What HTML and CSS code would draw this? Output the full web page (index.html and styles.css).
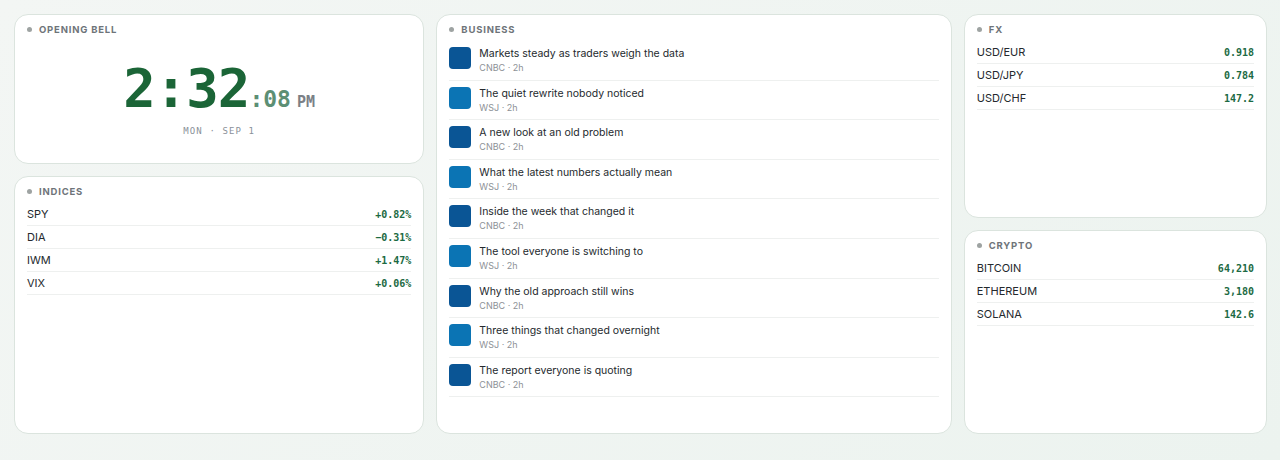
FILE: index.html
```html
<!DOCTYPE html>
<html lang="en">

<head>
    <meta charset="UTF-8">
    <title>Market Board</title>
    <link rel="stylesheet" href="styles.css">
</head>

<body>
    <div class="board">
        <div class="col">
            <div class="panel clock-panel">
                <div class="panel-title"><span class="dot"></span>OPENING BELL</div>
                <div class="clock">
                    <span class="hm">2:32</span><span class="sec">:08</span><span class="ampm">PM</span>
                </div>
                <div class="date">MON · SEP 1</div>
            </div>
            <div class="panel grow">
                <div class="panel-title"><span class="dot"></span>INDICES</div>
                <div class="row"><span>SPY</span><span class="val">+0.82%</span></div>
                <div class="row"><span>DIA</span><span class="val">−0.31%</span></div>
                <div class="row"><span>IWM</span><span class="val">+1.47%</span></div>
                <div class="row"><span>VIX</span><span class="val">+0.06%</span></div>
            </div>
        </div>

        <div class="panel">
            <div class="panel-title"><span class="dot"></span>BUSINESS</div>
            <div class="news">
                <div class="thumb dark"></div>
                <div><div class="headline">Markets steady as traders weigh the data</div><div class="meta">CNBC · 2h</div></div>
            </div>
            <div class="news">
                <div class="thumb light"></div>
                <div><div class="headline">The quiet rewrite nobody noticed</div><div class="meta">WSJ · 2h</div></div>
            </div>
            <div class="news">
                <div class="thumb dark"></div>
                <div><div class="headline">A new look at an old problem</div><div class="meta">CNBC · 2h</div></div>
            </div>
            <div class="news">
                <div class="thumb light"></div>
                <div><div class="headline">What the latest numbers actually mean</div><div class="meta">WSJ · 2h</div></div>
            </div>
            <div class="news">
                <div class="thumb dark"></div>
                <div><div class="headline">Inside the week that changed it</div><div class="meta">CNBC · 2h</div></div>
            </div>
            <div class="news">
                <div class="thumb light"></div>
                <div><div class="headline">The tool everyone is switching to</div><div class="meta">WSJ · 2h</div></div>
            </div>
            <div class="news">
                <div class="thumb dark"></div>
                <div><div class="headline">Why the old approach still wins</div><div class="meta">CNBC · 2h</div></div>
            </div>
            <div class="news">
                <div class="thumb light"></div>
                <div><div class="headline">Three things that changed overnight</div><div class="meta">WSJ · 2h</div></div>
            </div>
            <div class="news">
                <div class="thumb dark"></div>
                <div><div class="headline">The report everyone is quoting</div><div class="meta">CNBC · 2h</div></div>
            </div>
        </div>

        <div class="col">
            <div class="panel half">
                <div class="panel-title"><span class="dot"></span>FX</div>
                <div class="row"><span>USD/EUR</span><span class="val">0.918</span></div>
                <div class="row"><span>USD/JPY</span><span class="val">0.784</span></div>
                <div class="row"><span>USD/CHF</span><span class="val">147.2</span></div>
            </div>
            <div class="panel half">
                <div class="panel-title"><span class="dot"></span>CRYPTO</div>
                <div class="row"><span>BITCOIN</span><span class="val">64,210</span></div>
                <div class="row"><span>ETHEREUM</span><span class="val">3,180</span></div>
                <div class="row"><span>SOLANA</span><span class="val">142.6</span></div>
            </div>
        </div>
    </div>
</body>

</html>
```

FILE: styles.css
```css
body {
    margin: 0;
    padding: 14px 13px 14px 14px;
    height: 460px;
    box-sizing: border-box;
    font-family: Inter, "Noto Sans", sans-serif;
    background: linear-gradient(135deg, #f3f6f4 0%, #ecf3ef 100%);
    color: #24292d;
}

.board {
    display: grid;
    grid-template-columns: 410fr 515fr 303fr;
    gap: 12px;
    height: 420px;
}

.col {
    display: flex;
    flex-direction: column;
    gap: 12px;
    min-height: 0;
}

.panel {
    background-color: #fff;
    border: 1px solid #dbe4de;
    border-radius: 14px;
    padding: 8px 12px 0;
    box-sizing: border-box;
    overflow: hidden;
}

.grow {
    flex: 1;
}

.half {
    flex: 1;
}

.clock-panel {
    height: 150px;
    flex: none;
}

.panel-title {
    display: flex;
    align-items: center;
    gap: 7px;
    height: 12px;
    margin-bottom: 6px;
    font-size: 9.5px;
    font-weight: 700;
    letter-spacing: 0.8px;
    color: #6e7479;
}

.dot {
    width: 5px;
    height: 5px;
    border-radius: 50%;
    background-color: #9ea3a2;
}

.row {
    display: flex;
    justify-content: space-between;
    align-items: center;
    height: 22px;
    border-bottom: 1px solid #eef0ef;
    font-size: 11px;
}

.val {
    font-family: "DejaVu Sans Mono", monospace;
    font-size: 10px;
    font-weight: 700;
    color: #1c6a43;
}

/* clock */
.clock {
    display: flex;
    justify-content: center;
    align-items: baseline;
    margin-top: 27px;
    font-family: "DejaVu Sans Mono", monospace;
    font-weight: 700;
    line-height: 54px;
}

.hm {
    font-size: 54px;
    color: #1b6537;
    letter-spacing: -1px;
}

.sec {
    font-size: 23px;
    color: #5c8f74;
}

.ampm {
    font-size: 15px;
    color: #7b8086;
    margin-left: 6px;
}

.date {
    text-align: center;
    margin-top: -3px;
    font-family: "DejaVu Sans Mono", monospace;
    font-size: 9px;
    letter-spacing: 1.1px;
    color: #8a9199;
}

/* news */
.news {
    display: flex;
    gap: 8px;
    height: 39.6px;
    box-sizing: border-box;
    padding-top: 6px;
    border-bottom: 1px solid #eef0ef;
}

.thumb {
    width: 22px;
    height: 22px;
    border-radius: 4px;
    flex: none;
}

.thumb.dark {
    background-color: #0a5595;
}

.thumb.light {
    background-color: #0b74b4;
}

.headline {
    font-size: 10.5px;
    line-height: 14px;
    color: #24292d;
}

.meta {
    font-size: 9px;
    line-height: 14px;
    color: #8d9196;
}
```
